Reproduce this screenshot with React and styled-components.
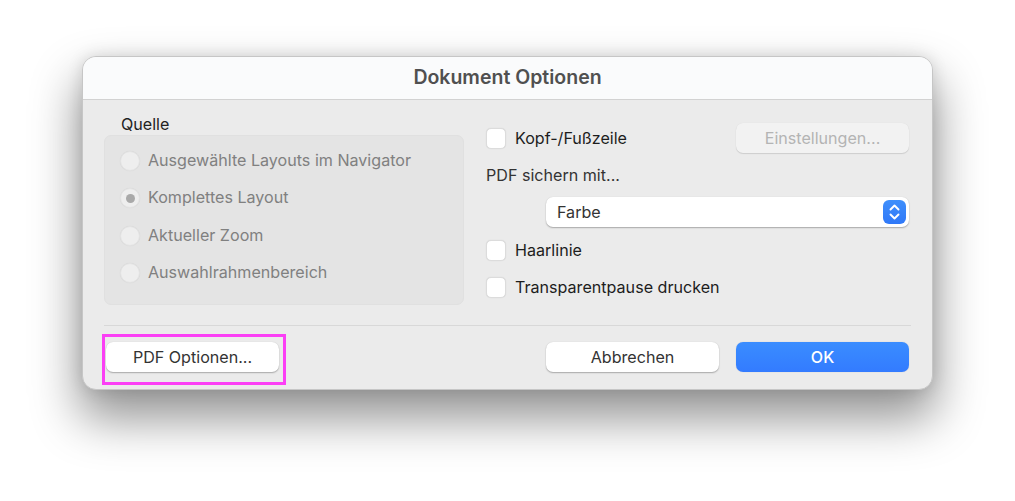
import React from "react";
import styled, { createGlobalStyle } from "styled-components";

const Global = createGlobalStyle`
  html, body { margin: 0; padding: 0; background: #fff; }
  body { font-family: Inter, "Liberation Sans", sans-serif; overflow: hidden; }
`;
const Page = styled.div`
  width: 1015px;
  height: 501px;
  padding: 56px 0 0 82px;
  box-sizing: border-box;
  overflow: hidden;
  background: #fff;
`;
const Window = styled.div`
  width: 851px;
  height: 334px;
  box-sizing: border-box;
  border: 1px solid #c6c6c6;
  border-radius: 14px;
  background: #ebebeb;
  box-shadow: 0 26px 48px 3px rgba(0,0,0,.42), 0 0 16px rgba(0,0,0,.12);
  position: relative;
  display: flex;
  flex-direction: column;
`;
const TitleBar = styled.div`
  height: 43px;
  flex: none;
  border-radius: 13px 13px 0 0;
  background: #fafbfc;
  border-bottom: 1px solid #d2d2d2;
  padding-bottom: 3px;
  box-sizing: border-box;
  display: flex;
  align-items: center;
  justify-content: center;
  font-size: 19.5px;
  font-weight: 600;
  color: #505050;
`;
const Body = styled.div`
  height: 225px;
  flex: none;
  padding: 0 23px 0 21px;
  display: grid;
  grid-template-columns: 360px 1fr;
  column-gap: 22px;
  box-sizing: border-box;
`;
const Source = styled.div`
  padding-top: 15px;
`;
const SourceTitle = styled.div`
  height: 20px;
  line-height: 18px;
  margin-left: 17px;
  font-size: 16.1px;
  color: #222;
`;
const Group = styled.div`
  height: 170px;
  box-sizing: border-box;
  padding: 15px 0 0 15px;
  border-radius: 7px;
  background: #e4e4e4;
  border: 1px solid #e0e0e0;
  display: flex;
  flex-direction: column;
  gap: 17.3px;
`;
const RadioRow = styled.div`
  height: 20px;
  display: flex;
  align-items: center;
  gap: 8px;
  font-size: 16.1px;
  color: #808080;
`;
const RadioText = styled.span`
  margin-bottom: 2px;
`;
const Radio = styled.span`
  width: 20px;
  height: 20px;
  box-sizing: border-box;
  flex: none;
  border-radius: 50%;
  background: #eeeeee;
  border: 1px solid #e3e3e3;
  box-shadow: 0 0 1px rgba(0,0,0,.1);
  display: flex;
  align-items: center;
  justify-content: center;
  &::after {
    content: "";
    width: 9px;
    height: 9px;
    border-radius: 50%;
    background: ${p => (p.$on ? "#a9a9a9" : "transparent")};
  }
`;
const Options = styled.div`
  padding-top: 23px;
  display: flex;
  flex-direction: column;
`;
const TopRow = styled.div`
  height: 30px;
  display: flex;
  align-items: center;
  justify-content: space-between;
`;
const CheckRow = styled.label`
  height: 20px;
  display: flex;
  align-items: center;
  gap: 9px;
  font-size: 16.1px;
  color: #1d1d1d;
  margin-top: ${p => p.$top || 0}px;
`;
const Check = styled.span`
  width: 20px;
  height: 21px;
  box-sizing: border-box;
  flex: none;
  border-radius: 5px;
  background: #fff;
  border: 1px solid #dcdcdc;
  box-shadow: 0 0 1px rgba(0,0,0,.12);
`;
const Label = styled.div`
  height: 20px;
  line-height: 20px;
  margin-top: 11.5px;
  font-size: 16.1px;
  color: #333;
`;
const Select = styled.div`
  width: 363px;
  height: 30px;
  margin: 12.5px 0 0 60px;
  box-sizing: border-box;
  padding: 0 3px 0 11px;
  border-radius: 7px;
  background: #fff;
  box-shadow: 0 1px 1.5px rgba(0,0,0,.28), 0 0 1px rgba(0,0,0,.12);
  display: flex;
  align-items: center;
  justify-content: space-between;
  font-size: 16.1px;
  color: #333;
`;
const Stepper = styled.span`
  width: 23px;
  height: 24px;
  border-radius: 6px;
  background: linear-gradient(#3f8ffb, #2f78f8);
  display: flex;
  align-items: center;
  justify-content: center;
`;
const Divider = styled.div`
  height: 1px;
  flex: none;
  margin: 0 21px;
  background: #d8d8d8;
`;
const Footer = styled.div`
  flex: 1;
  padding: 16px 23px 0;
  display: flex;
  align-items: flex-start;
  gap: 17px;
`;
const Button = styled.button`
  width: 173px;
  height: 30px;
  padding: 0;
  border: 0;
  border-radius: 7px;
  font-family: inherit;
  font-size: 16.1px;
  background: #fff;
  color: #333;
  box-shadow: 0 1px 1.5px rgba(0,0,0,.28), 0 0 1px rgba(0,0,0,.14);
`;
const Disabled = styled(Button)`
  background: #f2f2f2;
  color: #b4b4b4;
  box-shadow: 0 1px 1px rgba(0,0,0,.12), 0 0 1px rgba(0,0,0,.08);
`;
const Primary = styled(Button)`
  background: linear-gradient(#3a8dff, #337bff);
  color: #fff;
  font-weight: 500;
  box-shadow: 0 0 1px rgba(0,0,0,.2);
`;
const Spacer = styled.div`
  flex: 1;
`;
const Highlight = styled.div`
  position: absolute;
  left: 19px;
  top: 277px;
  width: 184px;
  height: 51px;
  box-sizing: border-box;
  border: 3.5px solid #fb3ff5;
  pointer-events: none;
`;

const sources = [
  ["Ausgewählte Layouts im Navigator", false],
  ["Komplettes Layout", true],
  ["Aktueller Zoom", false],
  ["Auswahlrahmenbereich", false],
];

export default function App() {
  return (
    <Page>
      <Global />
      <Window>
        <TitleBar>Dokument Optionen</TitleBar>
        <Body>
          <Source>
            <SourceTitle>Quelle</SourceTitle>
            <Group>
              {sources.map(([text, on]) => (
                <RadioRow key={text}>
                  <Radio $on={on} />
                  <RadioText>{text}</RadioText>
                </RadioRow>
              ))}
            </Group>
          </Source>
          <Options>
            <TopRow>
              <CheckRow><Check />Kopf-/Fußzeile</CheckRow>
              <Disabled disabled>Einstellungen...</Disabled>
            </TopRow>
            <Label>PDF sichern mit...</Label>
            <Select>
              Farbe
              <Stepper>
                <svg width="13" height="18" viewBox="0 0 13 18" fill="none" stroke="#fff" strokeWidth="1.9" strokeLinecap="round" strokeLinejoin="round">
                  <path d="M2.5 6.5 6.5 2.5l4 4" />
                  <path d="M2.5 11.5l4 4 4-4" />
                </svg>
              </Stepper>
            </Select>
            <CheckRow $top={13}><Check />Haarlinie</CheckRow>
            <CheckRow $top={17}><Check />Transparentpause drucken</CheckRow>
          </Options>
        </Body>
        <Divider />
        <Footer>
          <Button>PDF Optionen...</Button>
          <Spacer />
          <Button>Abbrechen</Button>
          <Primary>OK</Primary>
        </Footer>
        <Highlight />
      </Window>
    </Page>
  );
}
